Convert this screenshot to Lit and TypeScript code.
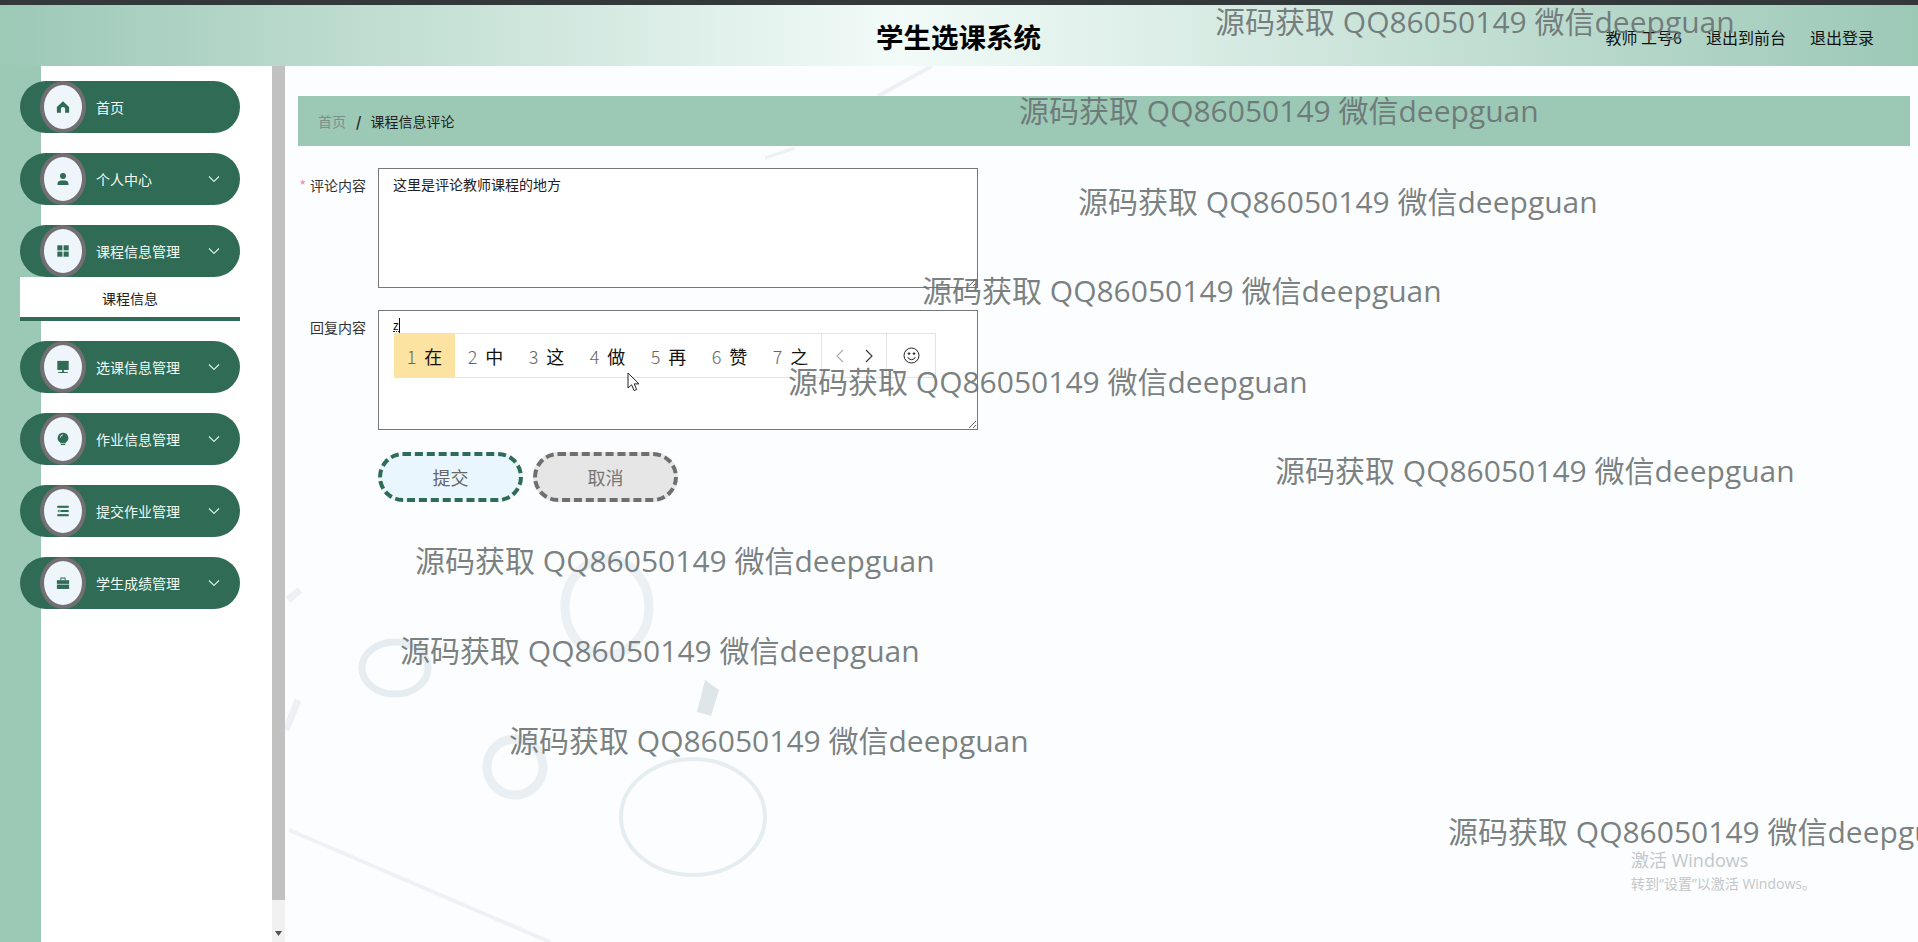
import { LitElement, html, css, svg } from "lit";
import { customElement } from "lit/decorators.js";

const ICONS: Record<string, unknown> = {
  home: svg`<path d="M8 1.5 1 8v6.5h4.6v-4.2a2.4 2.4 0 0 1 4.8 0v4.2H15V8z"/>`,
  user: svg`<circle cx="8" cy="4.6" r="3.4"/><path d="M1.8 14.8v-1.6c0-2.2 1.8-3.6 4-3.6h4.4c2.2 0 4 1.4 4 3.6v1.6z"/>`,
  grid: svg`<rect x="1.5" y="1.5" width="5.8" height="5.8"/><rect x="8.7" y="1.5" width="5.8" height="5.8"/><rect x="1.5" y="8.7" width="5.8" height="5.8"/><rect x="8.7" y="8.7" width="5.8" height="5.8"/>`,
  monitor: svg`<rect x="1.5" y="1" width="13" height="10.4"/><rect x="7" y="11.4" width="2" height="2.4"/><rect x="2.6" y="13.6" width="10.8" height="1.2"/>`,
  bulb: svg`<path d="M8 .8a6 6 0 0 0-3.4 11l.5 1h5.8l.5-1A6 6 0 0 0 8 .8z"/><rect x="5.4" y="13.6" width="5.2" height="1.3"/><path d="M5 6.4A3.2 3.2 0 0 1 8 3.2" fill="none" stroke="#eef6fb" stroke-width="1"/>`,
  ops: svg`<rect x="1.5" y="2" width="13" height="2.4"/><rect x="5" y="6.8" width="9.5" height="2.4"/><path d="M1.5 8 4 6.4v3.2z"/><rect x="1.5" y="11.6" width="13" height="2.4"/>`,
  case: svg`<path d="M5 1.6h6v3.2H9.9V2.8H6.1v2H5z"/><rect x="1" y="4.8" width="14" height="4.2"/><rect x="1" y="9.8" width="14" height="5"/>`,
};

const MENU = [
  { icon: "home", label: "首页", arrow: false },
  { icon: "user", label: "个人中心", arrow: true },
  { icon: "grid", label: "课程信息管理", arrow: true, sub: "课程信息" },
  { icon: "monitor", label: "选课信息管理", arrow: true },
  { icon: "bulb", label: "作业信息管理", arrow: true },
  { icon: "ops", label: "提交作业管理", arrow: true },
  { icon: "case", label: "学生成绩管理", arrow: true },
];

const MARKS = [
  [1215, 22], [1019, 111], [1078, 202], [922, 291], [788, 382],
  [1275, 471], [415, 561], [400, 651], [509, 741], [1448, 832],
];

const CANDS = ["在", "中", "这", "做", "再", "赞", "之"];

@customElement("app-root")
export class AppRoot extends LitElement {
  static styles = css`
    :host {
      display: block;
      position: relative;
      width: 1918px;
      height: 942px;
      overflow: hidden;
      background: #fff;
      font-family: "Noto Sans CJK SC", "Noto Sans", sans-serif;
      font-size: 14px;
      color: #333;
    }
    .topbar { height: 5px; background: #33393a; }
    .header {
      height: 61px;
      display: flex;
      align-items: center;
      position: relative;
      background: linear-gradient(90deg, #9cc8b6 0%, #f2fbf8 47%, #9cc8b6 100%);
    }
    .title {
      position: absolute;
      left: 876px;
      top: 11px;
      font-size: 27.5px;
      line-height: 40px;
      font-weight: 700;
      color: #000;
    }
    .tools {
      margin-left: auto;
      margin-right: 44px;
      display: flex;
      gap: 24px;
      font-size: 16px;
      line-height: 24px;
      color: #111;
      padding-top: 2px;
    }
    .body { display: flex; height: 876px; }
    .side {
      width: 272px;
      flex: none;
      box-sizing: border-box;
      padding: 15px 32px 0 20px;
      background: linear-gradient(90deg, #9cc8b6 41px, #fff 41px);
    }
    .item {
      height: 52px;
      border-radius: 26px;
      background: #2f6b55;
      display: flex;
      align-items: center;
      color: #f2fbf6;
    }
    .group { margin-bottom: 20px; }
    .circle {
      width: 46px;
      height: 52px;
      box-sizing: border-box;
      border: 4px solid #716f72;
      border-radius: 50%;
      background: #eef6fb;
      margin-left: 20px;
      display: flex;
      align-items: center;
      justify-content: center;
      flex: none;
    }
    .circle svg { width: 14px; height: 14px; fill: #2f6b55; display: block; }
    .label { margin-left: 10px; flex: 1; line-height: 20px; font-size: 14px; }
    .chev { width: 12px; height: 8px; margin-right: 20px; fill: none; stroke: #d8ece3; stroke-width: 1.2; }
    .sub {
      height: 40px;
      border-bottom: 4px solid #2f6b55;
      background: #fff;
      text-align: center;
      line-height: 42px;
      color: #222;
      box-sizing: content-box;
    }
    .scroll {
      width: 13px;
      flex: none;
      display: flex;
      flex-direction: column;
      background: #f1f1f1;
    }
    .thumb { height: 834px; background: #c1c1c1; }
    .down { flex: 1; display: flex; align-items: flex-end; justify-content: center; padding-bottom: 6px; }
    .down svg { width: 7px; height: 5px; fill: #505050; }
    .main {
      flex: 1;
      position: relative;
      background: #fbfdfe;
      padding: 30px 8px 0 13px;
    }
    .texture { position: absolute; left: 0; top: 0; width: 1633px; height: 876px; }
    .crumb {
      position: relative;
      height: 50px;
      background: #9cc8b6;
      display: flex;
      align-items: center;
      padding-left: 20px;
      gap: 8px;
      color: #222;
    }
    .crumb .home { color: #7f8f88; }
    .crumb .sep { font-weight: 700; color: #222; margin: 0 1px 0 2px; }
    .form {
      position: relative;
      padding-top: 22px;
      display: flex;
      flex-direction: column;
      gap: 22px;
    }
    .row { display: flex; }
    .lab {
      width: 80px;
      box-sizing: border-box;
      text-align: right;
      padding-right: 12px;
      line-height: 20px;
      padding-top: 7px;
      color: #333;
      flex: none;
    }
    .req { color: #e58ca0; margin-right: 4px; }
    .field { position: relative; width: 600px; height: 120px; }
    textarea {
      display: block;
      width: 600px;
      height: 120px;
      box-sizing: border-box;
      border: 1px solid #777;
      border-radius: 0;
      outline: none;
      background: #fff;
      margin: 0;
      padding: 5px 14px;
      font: 14px/20px "Noto Sans CJK SC", sans-serif;
      color: #222;
    }
    .caret { position: absolute; left: 15px; top: 8px; display: flex; align-items: flex-start; font-size: 12px; line-height: 14px; color: #111; }
    .caret span { border-bottom: 1px dotted #222; height: 13px; }
    .caret i { width: 1px; height: 15px; background: #111; display: block; }
    .ime {
      position: absolute;
      left: 16px;
      top: 23px;
      width: 542px;
      height: 45px;
      box-sizing: border-box;
      display: flex;
      align-items: stretch;
      background: #fff;
      border: 1px solid #e4e4e4;
    }
    .cand {
      width: 61px;
      display: flex;
      align-items: center;
      justify-content: center;
      gap: 8px;
      font-size: 18px;
      color: #111;
    }
    .cand b { font-weight: 300; color: #666; }
    .cand.on { background: #fde3a1; margin: -1px 0 -1px -1px; }
    .nav {
      width: 65px;
      border-left: 1px solid #e4e4e4;
      display: flex;
      align-items: center;
      justify-content: space-around;
      padding: 0 3px;
      box-sizing: border-box;
    }
    .nav svg { width: 8px; height: 14px; fill: none; stroke-width: 1.1; }
    .smile {
      flex: 1;
      border-left: 1px solid #e4e4e4;
      display: flex;
      align-items: center;
      justify-content: center;
    }
    .smile svg { width: 17px; height: 17px; fill: none; stroke: #222; stroke-width: 1; }
    .btns { display: flex; gap: 10px; margin-left: 80px; }
    .btn {
      width: 145px;
      height: 50px;
      box-sizing: border-box;
      border-radius: 25px;
      font-size: 18px;
      text-align: center;
      line-height: 42px;
      color: #666;
    }
    .save { border: 4px dashed #2f6b55; background: #e9f6fd; }
    .cancel { border: 4px dashed #6f6f6f; background: #e6e6e6; color: #777; }
    .mark {
      position: absolute;
      font-family: "Open Sans", "Noto Sans CJK SC", sans-serif;
      font-size: 30px;
      line-height: 40px;
      white-space: nowrap;
      color: rgba(105, 112, 112, 0.88);
      transform: translateY(-50%);
    }
    .mouse { position: absolute; left: 627px; top: 372px; width: 13px; height: 20px; }
    .activate {
      position: absolute;
      left: 1631px;
      top: 848px;
      color: #c3c7cb;
      font-family: "Open Sans", "Noto Sans CJK SC", sans-serif;
    }
    .activate div:first-child { font-size: 18px; line-height: 24px; }
    .activate div:last-child { font-size: 14px; line-height: 24px; }
  `;

  private texture() {
    return html`<svg class="texture" viewBox="285 66 1633 876" fill="none" stroke="#e4ebef">
      <ellipse cx="607" cy="607" rx="42" ry="48" stroke-width="9" stroke="#eaf0f3"/>
      <ellipse cx="395" cy="668" rx="33" ry="26" stroke-width="7" stroke="#e6edf0"/>
      <ellipse cx="515" cy="767" rx="28" ry="28" stroke-width="9" stroke="#e9eff2"/>
      <ellipse cx="693" cy="817" rx="72" ry="58" stroke-width="4" stroke="#e6edf0" />
      <path d="M705 680 l14 10 -8 26 -14 -4z" fill="#dfe6ea" stroke="none"/>
      <path d="M289 830 L550 942" stroke-width="4" stroke="#eef2f5"/>
      <path d="M932 66 L878 96" stroke-width="4" stroke="#eef1f3"/>
      <path d="M625 146 L785 158" stroke-width="0"/>
      <path d="M795 148 L765 158" stroke-width="3" stroke="#eef1f3"/>
      <path d="M288 600 L300 590 M286 730 L298 700" stroke-width="7" stroke="#eef0f5"/>
    </svg>`;
  }

  render() {
    return html`
      <div class="topbar"></div>
      <div class="header">
        <div class="title">学生选课系统</div>
        <div class="tools"><span>教师 工号6</span><span>退出到前台</span><span>退出登录</span></div>
      </div>
      <div class="body">
        <nav class="side">
          ${MENU.map(
            (m) => html`<div class="group">
              <div class="item">
                <div class="circle"><svg viewBox="0 0 16 16">${ICONS[m.icon]}</svg></div>
                <div class="label">${m.label}</div>
                ${m.arrow ? html`<svg class="chev" viewBox="0 0 12 8"><path d="M1 1.5 6 6.5 11 1.5"/></svg>` : ""}
              </div>
              ${m.sub ? html`<div class="sub">${m.sub}</div>` : ""}
            </div>`
          )}
        </nav>
        <div class="scroll">
          <div class="thumb"></div>
          <div class="down"><svg viewBox="0 0 7 5"><path d="M0 0h7L3.5 5z"/></svg></div>
        </div>
        <main class="main">
          ${this.texture()}
          <div class="crumb"><span class="home">首页</span><span class="sep">/</span><span>课程信息评论</span></div>
          <div class="form">
            <div class="row">
              <div class="lab"><span class="req">*</span>评论内容</div>
              <div class="field"><textarea readonly .value=${"这里是评论教师课程的地方"}></textarea></div>
            </div>
            <div class="row">
              <div class="lab">回复内容</div>
              <div class="field">
                <textarea readonly></textarea>
                <div class="caret"><span>z</span><i></i></div>
                <div class="ime">
                  ${CANDS.map(
                    (c, i) => html`<div class="cand ${i === 0 ? "on" : ""}"><b>${i + 1}</b><span>${c}</span></div>`
                  )}
                  <div class="nav">
                    <svg viewBox="0 0 8 14" stroke="#aaa"><path d="M7 1 1 7l6 6"/></svg>
                    <svg viewBox="0 0 8 14" stroke="#333"><path d="M1 1l6 6-6 6"/></svg>
                  </div>
                  <div class="smile">
                    <svg viewBox="0 0 17 17"><circle cx="8.5" cy="8.5" r="7.5"/><circle cx="6" cy="6.6" r=".8" fill="#222"/><circle cx="11" cy="6.6" r=".8" fill="#222"/><path d="M4.8 10.2a4 4 0 0 0 7.4 0"/></svg>
                  </div>
                </div>
              </div>
            </div>
            <div class="btns">
              <div class="btn save">提交</div>
              <div class="btn cancel">取消</div>
            </div>
          </div>
        </main>
      </div>
      ${MARKS.map(
        ([x, y]) => html`<div class="mark" style="left:${x}px;top:${y}px">源码获取 QQ86050149 微信deepguan</div>`
      )}
      <svg class="mouse" viewBox="0 0 13 20"><path d="M1 1v15l3.6-3.2 2.5 5.8 2.6-1.1-2.5-5.6H12z" fill="#fff" stroke="#222" stroke-width="1"/></svg>
      <div class="activate"><div>激活 Windows</div><div>转到“设置”以激活 Windows。</div></div>
    `;
  }
}
